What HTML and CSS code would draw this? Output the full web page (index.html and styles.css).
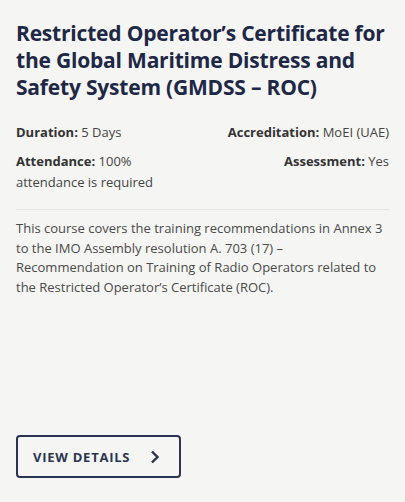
FILE: index.html
```html
<!DOCTYPE html>
<html>
<head>
<meta charset="utf-8">
<link rel="stylesheet" href="styles.css">
</head>
<body>
<div class="card">
  <h2 class="title">Restricted Operator’s Certificate for the Global Maritime Distress and Safety System (GMDSS – ROC)</h2>
  <div class="meta">
    <div class="meta-item"><b>Duration:</b> 5 Days</div>
    <div class="meta-item right"><b>Accreditation:</b> MoEI (UAE)</div>
    <div class="meta-item"><b>Attendance:</b> 100%<br>attendance is required</div>
    <div class="meta-item right"><b>Assessment:</b> Yes</div>
  </div>
  <p class="desc">This course covers the training recommendations in Annex 3 to the IMO Assembly resolution A. 703 (17) – Recommendation on Training of Radio Operators related to the Restricted Operator’s Certificate (ROC).</p>
  <a class="btn" href="#">VIEW DETAILS
    <svg width="10" height="14" viewBox="0 0 10 14"><path d="M2 1.5 L7.5 7 L2 12.5" fill="none" stroke="#2a3452" stroke-width="2.4"/></svg>
  </a>
</div>
</body>
</html>
```
FILE: styles.css
```css
html, body { margin: 0; padding: 0; }
body { background: #f5f5f3; font-family: "Open Sans", sans-serif; width: 405px; height: 502px; overflow: hidden; }
.card { padding: 20px 16px 0 16px; display: flex; flex-direction: column; height: 502px; box-sizing: border-box; }
.title { margin: 0; font-size: 21px; line-height: 27px; font-weight: 700; color: #1e2846; letter-spacing: -0.2px; }
.meta { display: grid; grid-template-columns: 1fr 1fr; row-gap: 8px; margin-top: 21px; padding-bottom: 16px; border-bottom: 1px solid #e4e4e2; font-size: 13px; line-height: 21px; color: #444; }
.meta b { color: #333; font-weight: 700; }
.right { text-align: right; }
.desc { margin: 9px 0 0; font-size: 13px; line-height: 19.7px; color: #4a4a4a; }
.btn { margin-top: auto; margin-bottom: 24px; align-self: flex-start; display: flex; align-items: center; gap: 20px; box-sizing: border-box; width: 165px; height: 43px; padding: 0 18px 0 15px; border: 2px solid #2a3452; border-radius: 4px; text-decoration: none; color: #2a3452; font-weight: 700; font-size: 13px; letter-spacing: 0.75px; }
```
